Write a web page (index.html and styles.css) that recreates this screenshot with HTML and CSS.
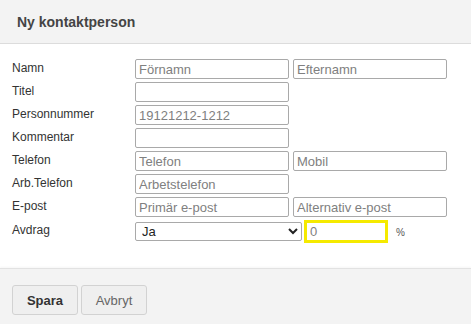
FILE: index.html
```html
<!DOCTYPE html>
<html lang="sv">
<head>
    <meta charset="UTF-8">
    <title>Ny kontaktperson</title>
    <link rel="stylesheet" href="styles.css">
</head>
<body>
    <div class="dialog">
        <div class="dialog-header">Ny kontaktperson</div>

        <div class="dialog-body">
            <div class="form-grid">
                <label>Namn</label>
                <input type="text" placeholder="Förnamn">
                <input type="text" placeholder="Efternamn">

                <label>Titel</label>
                <input type="text">
                <span></span>

                <label>Personnummer</label>
                <input type="text" class="muted" value="19121212-1212">
                <span></span>

                <label>Kommentar</label>
                <input type="text">
                <span></span>

                <label>Telefon</label>
                <input type="text" placeholder="Telefon">
                <input type="text" placeholder="Mobil">

                <label>Arb.Telefon</label>
                <input type="text" placeholder="Arbetstelefon">
                <span></span>

                <label>E-post</label>
                <input type="text" placeholder="Primär e-post">
                <input type="text" placeholder="Alternativ e-post">

                <label>Avdrag</label>
                <div class="avdrag">
                    <select>
                        <option>Ja</option>
                        <option>Nej</option>
                    </select>
                    <input type="text" class="percent" placeholder="0">
                    <span class="unit">%</span>
                </div>
            </div>
        </div>

        <div class="dialog-footer">
            <button class="btn primary">Spara</button>
            <button class="btn">Avbryt</button>
        </div>
    </div>
</body>
</html>
```

FILE: styles.css
```css
html, body {
    margin: 0;
    padding: 0;
    background: #fff;
}
body {
    font-family: Arial, "Liberation Sans", sans-serif;
    color: #333;
}
.dialog {
    width: 471px;
    height: 324px;
    display: flex;
    flex-direction: column;
}
.dialog-header {
    height: 43px;
    line-height: 45px;
    padding: 0 17px;
    background: #f3f3f3;
    border-bottom: 1px solid #dcdcdc;
    font-size: 14px;
    font-weight: bold;
    color: #444;
}
.dialog-body {
    flex: 1;
    padding: 15px 12px 0 12px;
}
.form-grid {
    display: grid;
    grid-template-columns: 119px 154px 154px;
    column-gap: 4px;
    row-gap: 3px;
    align-items: center;
}
.form-grid label {
    font-size: 12px;
    color: #333;
    margin-top: -3px;
}
input[type=text], select {
    box-sizing: border-box;
    height: 20px;
    margin: 0;
    padding: 0 3px;
    border: 1px solid #a9a9a9;
    border-radius: 2px;
    font-family: Arial, "Liberation Sans", sans-serif;
    font-size: 13px;
    color: #333;
    background: #fff;
}
input::placeholder,
input.muted {
    color: #808080;
}
.avdrag {
    grid-column: 2 / 4;
    display: flex;
    align-items: center;
}
.avdrag select {
    width: 167px;
    height: 19px;
    padding: 0 2px;
    color: #222;
}
.avdrag .percent {
    width: 84px;
    height: 23px;
    margin-left: 2px;
    border: 3px solid #f5ea00;
    border-radius: 0;
    color: #999;
}
.avdrag .unit {
    font-size: 10px;
    color: #555;
    margin-left: 8px;
    margin-top: 2px;
}
.dialog-footer {
    height: 39px;
    padding: 16px 12px 0 12px;
    background: #f3f3f3;
    border-top: 1px solid #e2e2e2;
    box-shadow: 0 -1px 2px rgba(0,0,0,0.04);
    display: flex;
    gap: 3px;
    align-items: flex-start;
}
.btn {
    width: 66px;
    height: 30px;
    padding: 0;
    border: 1px solid #d2d2d2;
    border-radius: 3px;
    background: #efefef;
    font-family: Arial, "Liberation Sans", sans-serif;
    font-size: 13px;
    color: #666;
    cursor: pointer;
}
.btn.primary {
    font-weight: bold;
    color: #333;
}
```
